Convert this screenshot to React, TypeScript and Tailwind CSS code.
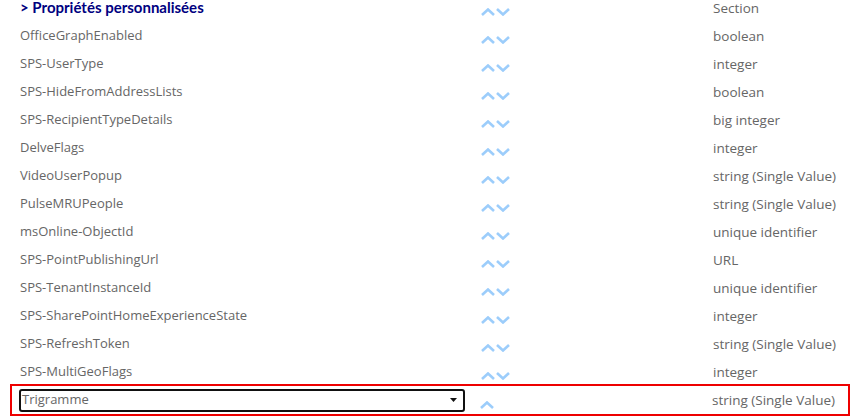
const rows: [string, string][] = [
  ["OfficeGraphEnabled", "boolean"],
  ["SPS-UserType", "integer"],
  ["SPS-HideFromAddressLists", "boolean"],
  ["SPS-RecipientTypeDetails", "big integer"],
  ["DelveFlags", "integer"],
  ["VideoUserPopup", "string (Single Value)"],
  ["PulseMRUPeople", "string (Single Value)"],
  ["msOnline-ObjectId", "unique identifier"],
  ["SPS-PointPublishingUrl", "URL"],
  ["SPS-TenantInstanceId", "unique identifier"],
  ["SPS-SharePointHomeExperienceState", "integer"],
  ["SPS-RefreshToken", "string (Single Value)"],
  ["SPS-MultiGeoFlags", "integer"],
]

function Up() {
  return (
    <svg width="14" height="8" viewBox="0 0 14 8">
      <path d="M1 7 L7 1.5 L13 7" fill="none" stroke="#9ccdfb" strokeWidth="2.6" />
    </svg>
  )
}

function Down() {
  return (
    <svg width="14" height="8" viewBox="0 0 14 8">
      <path d="M1 1 L7 6.5 L13 1" fill="none" stroke="#9ccdfb" strokeWidth="2.6" />
    </svg>
  )
}

function Row({ name, type, header = false }: { name: string; type: string; header?: boolean }) {
  return (
    <div className="flex h-[28px] items-center">
      <div className="w-[481px] pl-[20px]">
        {header ? (
          <span
            className="text-[15px] leading-[18px] font-bold text-[#000080]"
            style={{ fontFamily: "Lato, sans-serif" }}
          >
            &gt; Propriétés personnalisées
          </span>
        ) : (
          name
        )}
      </div>
      <div className="flex w-[232px] gap-[1px] pt-[8px]">
        <Up />
        <Down />
      </div>
      <div className="text-[13.5px]">{type}</div>
    </div>
  )
}

export default function App() {
  return (
    <div
      className="h-[417px] w-[865px] overflow-hidden bg-white text-[13px] text-[#666]"
      style={{ fontFamily: '"Open Sans", sans-serif' }}
    >
      <div className="-mt-[6px]">
        <Row name="" type="Section" header />
        {rows.map(([n, t]) => (
          <Row key={n} name={n} type={t} />
        ))}
        <div className="ml-[10px] -mt-[2px] flex h-[32px] w-[840px] items-center border-2 border-[#e00] pl-[7px]">
          <div className="flex h-[23px] w-[446px] items-center justify-between rounded-[3px] border-2 border-[#111] pl-[1px] pr-[6px]">
            <span>Trigramme</span>
            <svg width="7" height="4" viewBox="0 0 7 4">
              <path d="M0 0 H7 L3.5 4 Z" fill="#111" />
            </svg>
          </div>
          <div className="ml-[15px] w-[232px] pt-[9px]">
            <Up />
          </div>
          <div className="text-[13.5px]">string (Single Value)</div>
        </div>
      </div>
    </div>
  )
}
